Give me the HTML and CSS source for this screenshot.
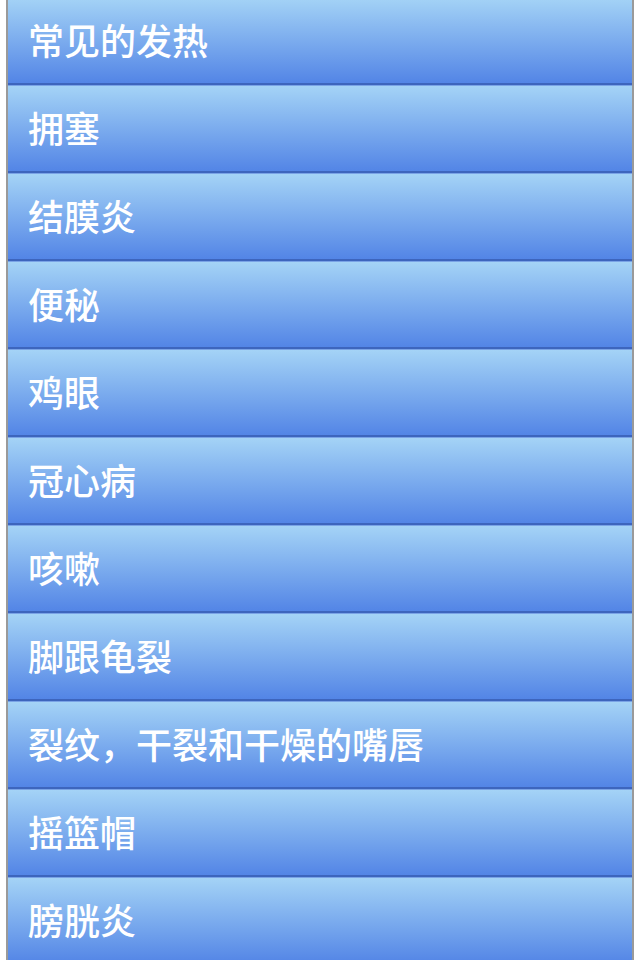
FILE: index.html
```html
<!DOCTYPE html>
<html lang="zh-CN">
  <head>
    <meta charset="UTF-8" />
    <meta name="viewport" content="width=device-width, initial-scale=1.0" />
    <title>常见病症</title>
    <link rel="stylesheet" href="styles.css">
  </head>
  <body>
    <ul class="lista">
      <li class="item">常见的发热</li>
      <li class="item">拥塞</li>
      <li class="item">结膜炎</li>
      <li class="item">便秘</li>
      <li class="item">鸡眼</li>
      <li class="item">冠心病</li>
      <li class="item">咳嗽</li>
      <li class="item">脚跟龟裂</li>
      <li class="item">裂纹，干裂和干燥的嘴唇</li>
      <li class="item">摇篮帽</li>
      <li class="item">膀胱炎</li>
    </ul>
  </body>
</html>
```

FILE: styles.css
```css
body {
  font-family: "Noto Sans CJK SC", "Liberation Sans", sans-serif;
  background-color: #fff;
  margin: 0;
  padding: 0;
  overflow: hidden;
}

.lista {
  list-style: none;
  margin: -3px 6px 0;
  padding: 0;
  border-left: 2px solid #9a9a9a;
  border-right: 2px solid #9a9a9a;
}

.item {
  height: 85px;
  box-sizing: border-box;
  display: flex;
  align-items: center;
  padding: 0 0 4px 20px;
  color: #fff;
  font-size: 36px;
  font-weight: 500;
  background: linear-gradient(#a4d3f6, #5385e6);
  border-top: 1px solid #7aa3e6;
  border-bottom: 2px solid #3d65bd;
  height: 88px;
}
```
